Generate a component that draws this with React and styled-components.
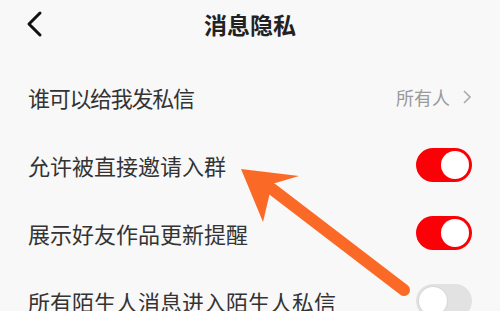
import styled, { createGlobalStyle } from "styled-components";

const GlobalStyle = createGlobalStyle`
  html, body {
    margin: 0;
    padding: 0;
    background: #f8f8f8;
  }
  body {
    font-family: "Noto Sans CJK SC", "Noto Sans", sans-serif;
  }
`;

const Page = styled.div`
  position: relative;
  width: 500px;
  height: 311px;
  overflow: hidden;
  background: #f8f8f8;
`;

const Header = styled.div`
  height: 48px;
  display: flex;
  align-items: center;
  justify-content: center;
  position: relative;
`;

const BackButton = styled.div`
  position: absolute;
  left: 24px;
  top: 10px;
  width: 24px;
  height: 28px;
  display: flex;
  align-items: center;
`;

const Title = styled.h1`
  margin: 0;
  font-size: 23px;
  font-weight: 700;
  color: #222;
`;

const List = styled.div`
  margin-top: 15px;
`;

const Row = styled.div`
  height: 68px;
  display: flex;
  align-items: center;
  justify-content: space-between;
  padding: 0 28px 0 28px;
`;

const Label = styled.span`
  font-size: 22px;
  color: #333;
  letter-spacing: ${(p) => (p.tight ? "-1.3px" : "0")};
`;

const Value = styled.span`
  display: flex;
  align-items: center;
  gap: 12px;
  font-size: 18px;
  color: #9a9a9a;
`;

const Toggle = styled.div`
  width: 56px;
  height: 34px;
  border-radius: 17px;
  box-sizing: border-box;
  padding: 3px;
  display: flex;
  justify-content: ${(p) => (p.on ? "flex-end" : "flex-start")};
  background: ${(p) => (p.on ? "#fb0006" : "#e2e2e2")};
`;

const Knob = styled.div`
  width: 28px;
  height: 28px;
  border-radius: 50%;
  background: #fff;
  box-shadow: ${(p) => (p.on ? "none" : "0 0 0 1px #d6d6d6")};
`;

const ArrowLayer = styled.svg`
  position: absolute;
  left: 0;
  top: 0;
  pointer-events: none;
`;

const rows = [
  { label: "谁可以给我发私信", value: "所有人", tight: true },
  { label: "允许被直接邀请入群", on: true },
  { label: "展示好友作品更新提醒", on: true },
  { label: "所有陌生人消息进入陌生人私信", on: false },
];

export default function App() {
  return (
    <Page>
      <GlobalStyle />
      <Header>
        <BackButton>
          <svg width="20" height="28" viewBox="0 0 20 28">
            <path
              d="M16 3 L5 14 L16 25"
              fill="none"
              stroke="#111"
              strokeWidth="3"
              strokeLinecap="round"
              strokeLinejoin="round"
            />
          </svg>
        </BackButton>
        <Title>消息隐私</Title>
      </Header>
      <List>
        {rows.map((r) => (
          <Row key={r.label}>
            <Label tight={r.tight}>{r.label}</Label>
            {r.value ? (
              <Value>
                {r.value}
                <svg width="10" height="16" viewBox="0 0 10 16">
                  <path
                    d="M2 2 L8 8 L2 14"
                    fill="none"
                    stroke="#aaa"
                    strokeWidth="1.6"
                  />
                </svg>
              </Value>
            ) : (
              <Toggle on={r.on}>
                <Knob on={r.on} />
              </Toggle>
            )}
          </Row>
        ))}
      </List>
      <ArrowLayer width="500" height="311" viewBox="0 0 500 311">
        <line
          x1="272"
          y1="189"
          x2="404"
          y2="290"
          stroke="#fa6a26"
          strokeWidth="12"
          strokeLinecap="round"
        />
        <polygon
          points="241,169 299,176 272,184 263,222"
          fill="#fa6a26"
        />
      </ArrowLayer>
    </Page>
  );
}
